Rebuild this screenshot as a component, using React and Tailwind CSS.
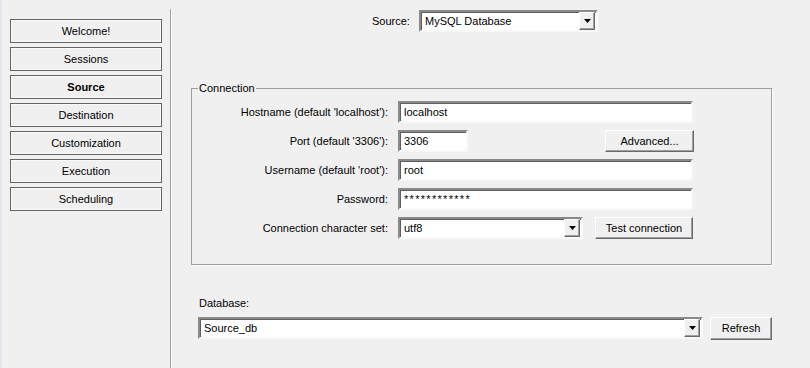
import React from 'react';

const font = { fontFamily: '"Liberation Sans", Arial, sans-serif' };

const navItems = ['Welcome!', 'Sessions', 'Source', 'Destination', 'Customization', 'Execution', 'Scheduling'];

const sunken =
    'h-[22px] bg-white border-2 border-t-[#8a8a8a] border-l-[#8a8a8a] border-b-[#f8f8f8] border-r-[#f8f8f8] shadow-[inset_1px_1px_0_#5f5f5f] flex items-center pl-[4px] text-[11px] text-black';

const raised =
    'h-[22px] bg-[#f0f0f0] border border-t-white border-l-white border-b-[#696969] border-r-[#696969] shadow-[inset_-1px_-1px_0_#a0a0a0] flex items-center justify-center text-[11px] text-black';

const ArrowButton = () => (
    <div className="w-[16px] h-[18px] mr-[1px] bg-[#f0f0f0] border border-t-white border-l-white border-b-[#696969] border-r-[#696969] shadow-[inset_-1px_-1px_0_#a0a0a0] flex items-center justify-center">
        <svg width="7" height="4" viewBox="0 0 7 4">
            <path d="M0 0h7L3.5 4z" fill="#000" />
        </svg>
    </div>
);

const Select = ({ value, width }) => (
    <div className={`${sunken} justify-between pl-[2px] pr-0`} style={{ width }}>
        <span>{value}</span>
        <ArrowButton />
    </div>
);

const Row = ({ label, children }) => (
    <div className="flex items-center h-[22px]">
        <div className="w-[206px] pr-[10px] text-right text-[11px] text-black">{label}</div>
        {children}
    </div>
);

const App = () => {
    return (
        <div className="w-[810px] h-[368px] bg-[#f0f0f0] flex overflow-hidden border-l-2 border-l-[#e2e7ef]" style={font}>
            {/* Sidebar */}
            <aside className="w-[168px] pl-[8px] pt-[19px] flex flex-col gap-[4px]">
                {navItems.map((item) => (
                    <div
                        key={item}
                        className={`w-[152px] h-[24px] border border-[#646464] shadow-[inset_0_0_0_1px_#fafafa] flex items-center justify-center text-[11px] text-black ${item === 'Source' ? 'font-bold' : ''}`}
                    >
                        {item}
                    </div>
                ))}
            </aside>

            {/* Separator */}
            <div className="mt-[9px] w-[2px] border-l border-l-[#a0a0a0] border-r border-r-white" />

            {/* Main */}
            <main className="flex-1 flex flex-col pl-[19px]">
                <div className="flex items-center mt-[10px] ml-[181px]">
                    <span className="text-[11px] text-black w-[47px]">Source:</span>
                    <Select value="MySQL Database" width={179} />
                </div>

                <fieldset className="mt-[49px] w-[581px] border border-[#a0a0a0] shadow-[1px_1px_0_#fff] pb-[25px] pt-[6px] px-0">
                    <legend className="ml-[6px] px-[1px] text-[11px] text-black leading-[14px]">Connection</legend>
                    <div className="flex flex-col gap-[7px]">
                        <Row label="Hostname (default 'localhost'):">
                            <div className={sunken} style={{ width: 295 }}>localhost</div>
                        </Row>
                        <Row label="Port (default '3306'):">
                            <div className={sunken} style={{ width: 70 }}>3306</div>
                            <div className={`${raised} ml-[137px] w-[89px]`}>Advanced...</div>
                        </Row>
                        <Row label="Username (default 'root'):">
                            <div className={sunken} style={{ width: 295 }}>root</div>
                        </Row>
                        <Row label="Password:">
                            <div className={`${sunken} items-start pt-[1px] tracking-[1.3px] text-[#4a3a20]`} style={{ width: 295 }}>************</div>
                        </Row>
                        <Row label="Connection character set:">
                            <Select value="utf8" width={185} />
                            <div className={`${raised} ml-[12px] w-[98px]`}>Test connection</div>
                        </Row>
                    </div>
                </fieldset>

                <div className="mt-[30px] ml-[8px] text-[11px] text-black">Database:</div>
                <div className="flex items-center mt-[5px] ml-[7px]">
                    <Select value="Source_db" width={505} />
                    <div className={`${raised} ml-[7px] w-[62px] h-[23px]`}>Refresh</div>
                </div>
            </main>
        </div>
    );
};

export default App;
